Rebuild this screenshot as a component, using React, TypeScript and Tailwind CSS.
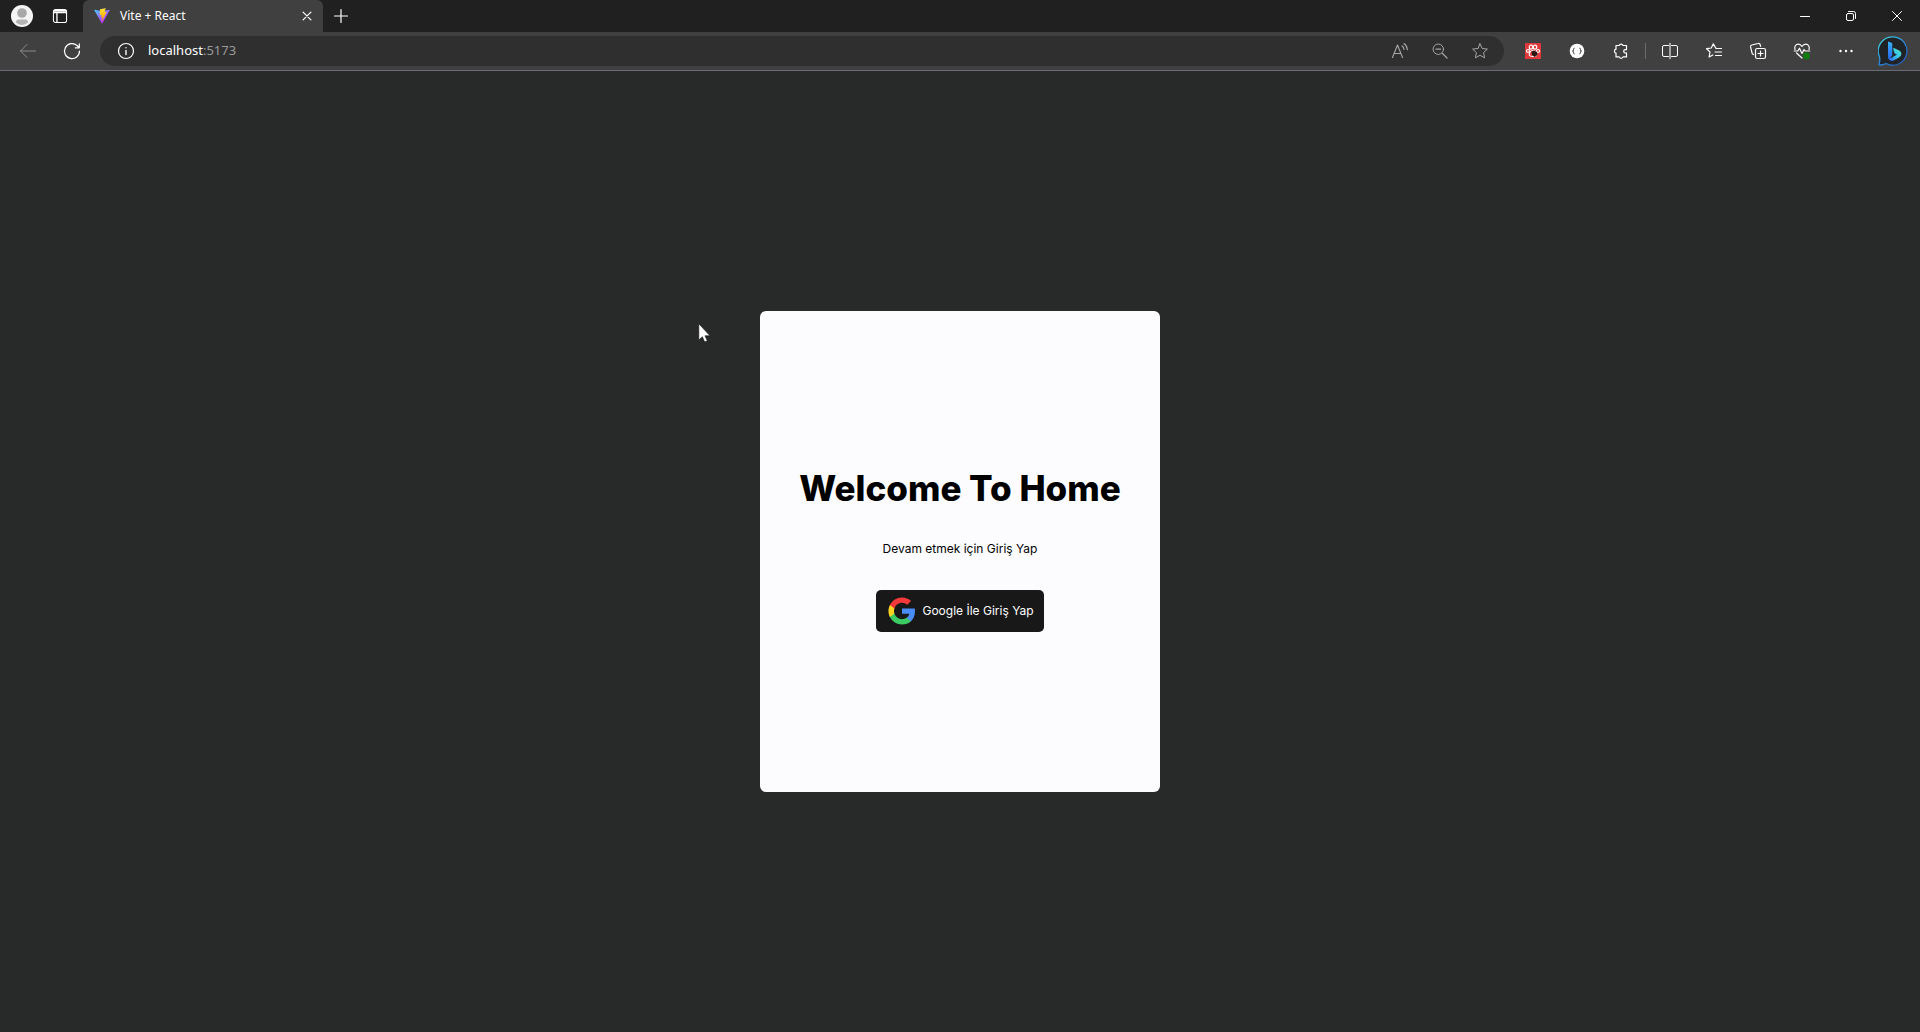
import type { ReactNode } from "react";

type IconProps = { children: ReactNode; size?: "sm" | "md"; className?: string };

function Line({ children, size = "md", className = "" }: IconProps) {
  const box = size === "sm" ? "size-3.5" : "size-4";
  return (
    <svg
      viewBox="0 0 16 16"
      fill="none"
      stroke="currentColor"
      strokeWidth="1"
      strokeLinecap="round"
      strokeLinejoin="round"
      aria-hidden="true"
      className={`${box} shrink-0 overflow-visible ${className}`}
    >
      {children}
    </svg>
  );
}

function ViteLogo() {
  return (
    <svg viewBox="0 0 410 404" className="size-4 shrink-0" aria-hidden="true">
      <defs>
        <linearGradient id="viteA" x1="6" y1="33" x2="235" y2="344" gradientUnits="userSpaceOnUse">
          <stop stopColor="#41d1ff" />
          <stop offset="1" stopColor="#bd34fe" />
        </linearGradient>
        <linearGradient id="viteB" x1="194" y1="9" x2="236" y2="293" gradientUnits="userSpaceOnUse">
          <stop stopColor="#ffea83" />
          <stop offset="0.08" stopColor="#ffdd35" />
          <stop offset="1" stopColor="#ffa800" />
        </linearGradient>
      </defs>
      <path
        fill="url(#viteA)"
        d="M399.641 59.525 215.643 388.545C211.844 395.338 202.084 395.378 198.228 388.618L10.582 59.556C6.381 52.19 12.68 43.267 21.028 44.759L205.223 77.682C206.398 77.892 207.601 77.89 208.776 77.676L389.119 44.806C397.439 43.289 403.768 52.143 399.641 59.525Z"
      />
      <path
        fill="url(#viteB)"
        d="M292.965 1.574 156.801 28.255C154.563 28.694 152.906 30.59 152.771 32.866L144.395 174.33C144.198 177.662 147.258 180.248 150.51 179.498L188.42 170.749C191.967 169.931 195.172 173.055 194.443 176.622L183.18 231.775C182.422 235.487 185.907 238.661 189.532 237.56L212.947 230.446C216.577 229.344 220.065 232.527 219.297 236.242L201.398 322.875C200.278 328.294 207.486 331.249 210.492 326.603L212.5 323.5 323.454 102.072C325.312 98.365 322.108 94.137 318.036 94.923L279.014 102.454C275.347 103.161 272.227 99.746 273.262 96.158L298.731 7.867C299.767 4.273 296.636.855 292.965 1.574Z"
      />
    </svg>
  );
}

function ProfilePicture() {
  return (
    <svg viewBox="0 0 22 22" className="size-[22px]" aria-hidden="true">
      <circle cx="11" cy="11" r="11" fill="#f4f4f4" />
      <circle cx="11" cy="8" r="4.8" fill="#a8a8a8" />
      <path d="M5 17.500a2.500 2.500 0 0 1 2.500-3h7a2.500 2.500 0 0 1 2.500 3a8.500 8.500 0 0 1-12 0z" fill="#b4b4b4" />
    </svg>
  );
}

function PawIcon() {
  return (
    <svg viewBox="0 0 16 16" className="size-4" aria-hidden="true">
      <rect width="16" height="16" rx="1" fill="#e0393b" />
      <g fill="none" stroke="#fff" strokeWidth="1.200">
        <ellipse cx="6" cy="4.200" rx="1.700" ry="2" />
        <ellipse cx="10" cy="4.200" rx="1.700" ry="2" />
        <circle cx="3" cy="8" r="1.500" />
        <circle cx="13" cy="8" r="1.500" />
        <path d="M8 7.500c-2.500 0-4.500 3-3.500 5 .8 1 2 .8 3.500.8s3 .2 3.500-.8c1-2-1-5-3.500-5z" />
      </g>
      <path d="M6.500 8.500 9 7.500l3 1.500.5 3-3 2-2.500-2z" fill="#2b1614" />
    </svg>
  );
}

function BracesIcon() {
  return (
    <svg viewBox="0 0 16 16" className="size-4" aria-hidden="true">
      <circle cx="8" cy="8" r="7.300" fill="#fff" />
      <path
        d="M5.500 5.200c-1 0-1 .6-1 1.400S4.300 8 3.500 8c.8 0 1 .6 1 1.400s0 1.400 1 1.400M10.500 5.200c1 0 1 .6 1 1.400s.2 1.400 1 1.400c-.8 0-1 .6-1 1.400s0 1.400-1 1.400"
        fill="none"
        stroke="#333"
        strokeWidth="1"
      />
    </svg>
  );
}

function BingLogo() {
  return (
    <svg viewBox="0 0 30 30" className="size-[30px]" aria-hidden="true">
      <defs>
        <linearGradient id="bingRing" x1="4" y1="2" x2="26" y2="28" gradientUnits="userSpaceOnUse">
          <stop stopColor="#3fd0d8" />
          <stop offset="0.5" stopColor="#2a8ade" />
          <stop offset="1" stopColor="#2255b8" />
        </linearGradient>
        <linearGradient id="bingStem" x1="12" y1="5" x2="13" y2="24" gradientUnits="userSpaceOnUse">
          <stop stopColor="#38b5f5" />
          <stop offset="1" stopColor="#2464ee" />
        </linearGradient>
        <linearGradient id="bingBowl" x1="23" y1="14" x2="12" y2="24" gradientUnits="userSpaceOnUse">
          <stop stopColor="#45e0c4" />
          <stop offset="0.55" stopColor="#38c0f4" />
          <stop offset="1" stopColor="#2d6cf0" />
        </linearGradient>
      </defs>
      <path
        d="M15 .8A14.200 14.200 0 1 1 8 27.500c-1.500.9-3.600 1.600-6.200 1.500-.8 0-1-.6-.7-1.200 1-2 .8-4 .5-6.800A14.200 14.200 0 0 1 15 .8z"
        fill="#202326"
        stroke="url(#bingRing)"
        strokeWidth="1.300"
      />
      <path d="M10 5.500l3.400 1.200c.6.200.9.600.9 1.200v11.300L11.500 23 10 20.800z" fill="url(#bingStem)" />
      <path
        d="M16 12l5.200 2.600c1.600.8 2.400 2.400 2 4.100-.3 1.300-1.200 2.100-2.300 2.800l-5.200 3c-3 1.400-5.700-.8-5.700-3.700 1 1.600 2.600 1.600 4 .8l5-3-1.800-.8c-.5-.3-.8-.7-1-1.200l-.9-3.400c-.2-.8.200-1.400.7-1.200z"
        fill="url(#bingBowl)"
      />
    </svg>
  );
}

function GoogleLogo() {
  return (
    <svg viewBox="-1 -1 26 26" className="size-8 shrink-0" aria-hidden="true">
      <path fill="#4a8cf5" d="M22.560 12.250c0-.78-.07-1.530-.2-2.250H12v4.260h5.920c-.26 1.370-1.040 2.530-2.210 3.310v2.770h3.570c2.080-1.920 3.280-4.740 3.280-8.090z" />
      <path fill="#3ccb62" d="M12 23c2.970 0 5.460-.98 7.280-2.660l-3.570-2.770c-.98.66-2.230 1.060-3.710 1.060-2.860 0-5.290-1.930-6.160-4.530H2.180v2.840C3.990 20.530 7.700 23 12 23z" />
      <path fill="#fdd421" d="M5.840 14.090c-.22-.66-.35-1.360-.35-2.090s.13-1.430.35-2.090V7.070H2.180C1.430 8.550 1 10.220 1 12s.43 3.450 1.180 4.930l2.850-2.220.81-.62z" />
      <path fill="#f4393a" d="M12 5.380c1.620 0 3.060.56 4.210 1.640l3.150-3.150C17.450 2.090 14.970 1 12 1 7.700 1 3.990 3.470 2.180 7.070l3.660 2.840c.87-2.600 3.300-4.530 6.160-4.530z" />
    </svg>
  );
}

const STAR = "M8 .8l2.200 4.700 5.200.6-3.800 3.500 1 5.200L8 12.300l-4.600 2.500 1-5.200L.6 6.100l5.200-.6z";

function ToolButton({ label, children, className = "w-11" }: { label: string; children: ReactNode; className?: string }) {
  return (
    <button type="button" aria-label={label} className={`flex h-8 shrink-0 items-center justify-center ${className}`}>
      {children}
    </button>
  );
}

function TabStrip() {
  return (
    <header className="flex h-8 items-center bg-[#202020] text-white">
      <ToolButton label="Profile">
        <ProfilePicture />
      </ToolButton>
      <ToolButton label="Tab actions" className="w-8">
        <Line size="sm">
          <rect x="0.500" y="0.500" width="15" height="15" rx="2.500" strokeWidth="1.200" />
          <path d="M1 2h14M1 4h14M4.500 5v10" strokeWidth="1.500" />
        </Line>
      </ToolButton>
      <div className="ml-[7px] flex h-8 w-60 items-center rounded-t-md bg-[#404040] pr-1 pl-[11px]">
        <ViteLogo />
        <span className="ml-2.5 grow text-xs">Vite + React</span>
        <ToolButton label="Close tab" className="w-6">
          <Line size="sm">
            <path d="M3.500 3.500l9 9M12.500 3.500l-9 9" strokeWidth="1.400" />
          </Line>
        </ToolButton>
      </div>
      <ToolButton label="New tab" className="w-9">
        <Line>
          <path d="M8 1.500v13M1.500 8h13" strokeWidth="1.200" />
        </Line>
      </ToolButton>
      <div className="ml-auto flex">
        <ToolButton label="Minimize" className="w-[46px]">
          <Line>
            <path d="M3.500 8.500h9" />
          </Line>
        </ToolButton>
        <ToolButton label="Restore" className="w-[46px]">
          <Line>
            <rect x="3.500" y="5.500" width="7" height="7" rx="1.500" />
            <path d="M5.500 3.500h5a2 2 0 0 1 2 2v5" />
          </Line>
        </ToolButton>
        <ToolButton label="Close" className="w-[46px]">
          <Line>
            <path d="M3.500 3.500l9 9M12.500 3.500l-9 9" />
          </Line>
        </ToolButton>
      </div>
    </header>
  );
}

function Toolbar() {
  return (
    <nav className="flex h-[39px] items-center border-b border-[#6b6b78] bg-[#404040] pl-1.5 text-white">
      <ToolButton label="Back">
        <Line className="text-[#8a8a8a]">
          <path d="M15.500 8H.5M7 1.500L.5 8 7 14.500" />
        </Line>
      </ToolButton>
      <ToolButton label="Refresh">
        <Line>
          <path d="M15.500 8A7.500 7.500 0 1 1 13 2.500l2 2M15.300.8v4h-4" strokeWidth="1.200" />
        </Line>
      </ToolButton>
      <div className="ml-1.5 flex h-[30px] grow items-center rounded-full bg-[#2f2f2f] pl-1">
        <ToolButton label="Site information">
          <Line>
            <circle cx="8" cy="8" r="7.500" strokeWidth="1.200" />
            <path d="M8 7.500v4M8 4.700v.1" strokeWidth="1.400" />
          </Line>
        </ToolButton>
        <label className="relative flex h-full grow items-center text-[13px]">
          <span aria-hidden="true">
            localhost<span className="text-[#9a9a9a]">:5173</span>
          </span>
          <input
            type="text"
            aria-label="Address"
            defaultValue="localhost:5173"
            className="absolute inset-0 bg-transparent text-transparent outline-none"
          />
        </label>
        <div className="flex text-[#a6a6a6]">
          <ToolButton label="Read aloud" className="w-10">
            <Line>
              <path d="M.5 14.500L5.500 2l5 12.500M2.200 10.500h6.600M10 2.800c1.200.9 1.900 2.200 2 3.700M12 .5c1.900 1.300 3.200 3.400 3.400 6.300" strokeWidth="1.100" />
            </Line>
          </ToolButton>
          <ToolButton label="Zoom out" className="w-10">
            <Line>
              <path d="M10.500 10.500l4.500 4.500M4 6.200h4.500" strokeWidth="1.200" />
              <circle cx="6.300" cy="6.200" r="5.200" />
            </Line>
          </ToolButton>
          <ToolButton label="Add to favorites" className="mr-1 w-10">
            <Line>
              <path d={STAR} />
            </Line>
          </ToolButton>
        </div>
      </div>
      <div className="ml-[7px] flex items-center">
        <ToolButton label="Paw extension">
          <PawIcon />
        </ToolButton>
        <ToolButton label="Braces extension">
          <BracesIcon />
        </ToolButton>
        <ToolButton label="Extensions">
          <Line>
            <path
              d="M3 2.500h3.200a2 2 0 0 1 3.800 0h3.500v4.200c-1.600-.4-2.800.3-2.800 1.600s1.200 2 2.800 1.600v4h-3.500a2 2 0 0 1-3.800 0H3v-3.800a2 2 0 0 1 0-3.900z"
              strokeWidth="1.200"
            />
          </Line>
        </ToolButton>
        <span className="mx-0.5 h-4 w-px bg-[#6a6a6a]" />
        <ToolButton label="Split screen">
          <Line>
            <path d="M6.500 2.500H2a1.500 1.500 0 0 0-1.500 1.500v8A1.500 1.500 0 0 0 2 13.500h4.500M9.500 2.500H14A1.500 1.500 0 0 1 15.500 4v8a1.500 1.500 0 0 1-1.500 1.500H9.500" />
            <path d="M8 .5v15" stroke="#c8c8c8" strokeWidth="1.500" />
          </Line>
        </ToolButton>
        <ToolButton label="Favorites">
          <Line>
            <path d="M10 5.500L7.300.8 5.300 5 .6 5.700 4 9l-.9 5 3.700-2M10 5.500h5.500M9 9h6.500M9.500 12.500h6" strokeWidth="1.200" />
          </Line>
        </ToolButton>
        <ToolButton label="Collections">
          <Line>
            <rect x="5.500" y="5.500" width="10" height="10" rx="1.800" strokeWidth="1.200" />
            <path d="M10.500 8v5M8 10.500h5M3.500 11.500L2.300 10.800.6 4.200A1.800 1.800 0 0 1 1.800 2L8 .5a1.800 1.800 0 0 1 2.200 1.200l.4 1.600" strokeWidth="1.200" />
          </Line>
        </ToolButton>
        <ToolButton label="Browser essentials">
          <Line>
            <path
              d="M1 6.500C0 3.500 1.800 1.200 4.300 1.200c1.700 0 2.800.9 3.700 2.300.9-1.400 2-2.300 3.700-2.300 2.500 0 4.300 2.300 3.300 5.300M.2 8h3.600l1.700-2.800L8 10.500l2-4L11 8h4.800M2.500 10L8 15"
              strokeWidth="1.200"
            />
            <circle cx="12.500" cy="13" r="3.400" fill="#107c10" stroke="none" />
          </Line>
        </ToolButton>
        <ToolButton label="Settings and more">
          <Line>
            <g fill="currentColor" stroke="none">
              <circle cx="2.500" cy="8" r="1.200" />
              <circle cx="8" cy="8" r="1.200" />
              <circle cx="13.500" cy="8" r="1.200" />
            </g>
          </Line>
        </ToolButton>
        <ToolButton label="Bing" className="mr-1 ml-0.5 w-[46px]">
          <BingLogo />
        </ToolButton>
      </div>
    </nav>
  );
}

function Pointer() {
  return (
    <svg viewBox="0 0 12 20" className="absolute top-3 -left-[62px] h-5 w-3 overflow-visible" aria-hidden="true">
      <path d="M.8.800v16.200l3.500-3.300 2.400 5.300 2.600-1.200-2.300-5H12z" fill="#fff" stroke="#111" strokeWidth="0.600" />
    </svg>
  );
}

export default function App() {
  return (
    <div className="flex h-screen flex-col bg-[#282a29] font-['Noto_Sans',sans-serif]">
      <TabStrip />
      <Toolbar />
      <main className="flex grow items-center justify-center font-['Inter',sans-serif]">
        <section className="relative flex h-1/2 w-[400px] flex-col items-center justify-center gap-[33px] rounded-md bg-[#fcfcfe] pb-1 text-black">
          <Pointer />
          <h1 className="text-[35px] leading-10 font-extrabold whitespace-nowrap">Welcome To Home</h1>
          <p className="text-xs">Devam etmek için Giriş Yap</p>
          <button
            type="button"
            className="flex items-center gap-1 rounded-[5px] bg-[#181818] py-[5px] pr-2.5 pl-2.5 text-xs text-white"
          >
            <GoogleLogo />
            Google İle Giriş Yap
          </button>
        </section>
      </main>
    </div>
  );
}
